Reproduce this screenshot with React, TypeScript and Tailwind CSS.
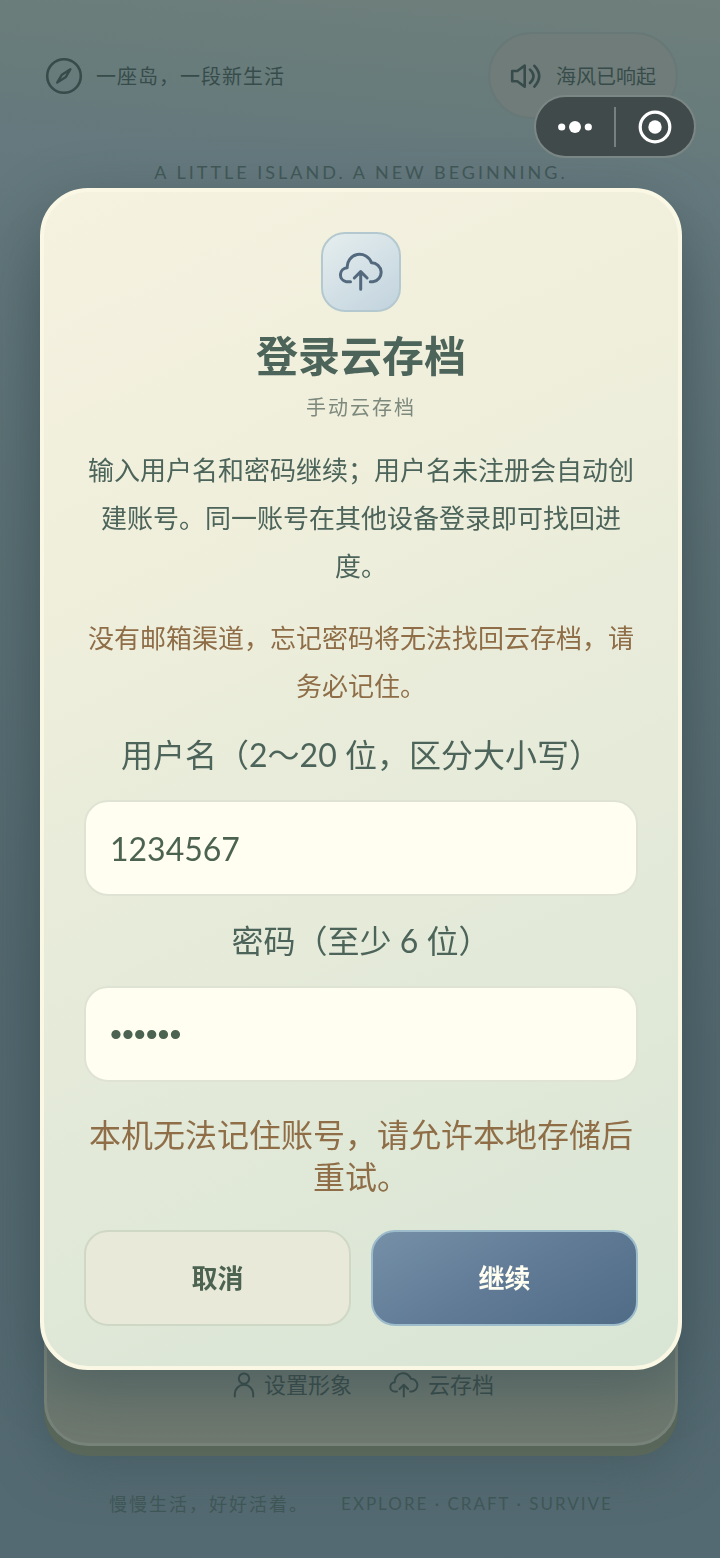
import { useState } from "react";

function CloudUpload({ className }: { className?: string }) {
  return (
    <svg viewBox="0 0 48 48" fill="none" stroke="currentColor" strokeWidth="3" strokeLinecap="round" strokeLinejoin="round" className={className} aria-hidden="true">
      <path d="M13.5 33.7H9.3A7 7 0 0 1 10.2 19.8A12.5 12.5 0 0 1 34.5 14.8A9.5 9.5 0 0 1 36 33.7H33.3"/>
      <path d="M23.7 41.3V23.6M17.3 30L23.7 23.6L30.1 30"/>
    </svg>
  );
}

function Compass() {
  return (
    <svg viewBox="0 0 40 40" fill="none" stroke="currentColor" strokeWidth="2.6" strokeLinejoin="round" className="size-10" aria-hidden="true">
      <circle cx="20" cy="20" r="16.8"/>
      <path d="M26.4 13.2L21.9 20.9L13.2 26.6L17.9 18.7Z" strokeWidth="2.4"/>
    </svg>
  );
}

function Speaker() {
  return (
    <svg viewBox="0 0 32 32" fill="none" stroke="currentColor" strokeWidth="2.6" strokeLinecap="round" strokeLinejoin="round" className="size-8" aria-hidden="true">
      <path d="M2.2 11H7.3L14.7 5.5V26.8L7.3 21.3H2.2Z"/>
      <path d="M20 9.6Q27 16 20 23M24.4 5.8Q34 16 24.4 26.6"/>
    </svg>
  );
}

function Person() {
  return (
    <svg viewBox="0 0 24 26" fill="none" stroke="currentColor" strokeWidth="2" strokeLinecap="round" className="h-[26px] w-6" aria-hidden="true">
      <circle cx="12" cy="6.6" r="5.2"/>
      <path d="M2.8 24.5V22a9.2 9.2 0 0 1 18.4 0v2.5"/>
    </svg>
  );
}

// Host app capsule, floats above everything
function Capsule() {
  return (
    <div className="fixed top-[95px] right-6 z-20 flex h-[63px] w-[162px] items-center rounded-full border-2 border-[#7b8785] bg-[#404a4a] text-white">
      <button type="button" aria-label="更多" className="flex flex-1 justify-center">
        <svg viewBox="0 0 36 14" fill="currentColor" className="h-[14px] w-9">
          <circle cx="4.7" cy="7" r="3.6"/>
          <circle cx="18" cy="7" r="6"/>
          <circle cx="31.3" cy="7" r="3.6"/>
        </svg>
      </button>
      <span className="h-10 w-[2px] bg-[#768080]"/>
      <button type="button" aria-label="关闭" className="flex flex-1 justify-center">
        <svg viewBox="0 0 34 34" className="size-[34px]">
          <circle cx="17" cy="17" r="14.8" fill="none" stroke="currentColor" strokeWidth="3.2"/>
          <circle cx="17" cy="17" r="6.7" fill="currentColor"/>
        </svg>
      </button>
    </div>
  );
}

const field = "h-24 w-full rounded-3xl border-2 border-[#dfe3d3] bg-[#fffef1] px-6 text-[#4b6350] outline-none";

function LoginDialog() {
  const [name, setName] = useState("1234567");
  const [password, setPassword] = useState("123456");
  return (
    <div className="fixed inset-0 z-10 flex items-center pl-10 pr-[38px]">
      <form
        role="dialog"
        aria-labelledby="dialog-title"
        onSubmit={(e) => e.preventDefault()}
        className="flex w-full flex-col items-center rounded-[48px] border-4 border-[#faf8e4] bg-linear-[155deg,#f5f2e0_0%,#f0efdc_25%,#e5ead9_60%,#d8e5d5_100%] bg-origin-border px-10 py-10 text-center text-[#4c645a] shadow-[0_16px_60px_rgba(50,68,72,0.4)]"
      >
        <div className="flex size-20 items-center justify-center rounded-3xl border-2 border-[#b4c9cf] bg-linear-[145deg,#e5eeee,#c2d3de] text-[#52697e]">
          <CloudUpload className="size-12"/>
        </div>
        <h1 id="dialog-title" className="mt-4 text-[42px] leading-[56px] font-bold">登录云存档</h1>
        <p className="mt-2 text-[20px] leading-[30px] tracking-[2px] text-[#7d897d]">手动云存档</p>
        <p className="mt-6 text-[26px] leading-[48px]">输入用户名和密码继续；用户名未注册会自动创建账号。同一账号在其他设备登录即可找回进度。</p>
        <p className="mt-6 text-[26px] leading-[48px] text-[#8e6d47]">没有邮箱渠道，忘记密码将无法找回云存档，请务必记住。</p>

        <label htmlFor="name" className="mt-6 text-[32px] leading-[42px]">用户名（2～20 位，区分大小写）</label>
        <input id="name" type="text" value={name} onChange={(e) => setName(e.target.value)} className={`mt-6 text-[32px] ${field}`}/>
        <label htmlFor="password" className="mt-6 text-[32px] leading-[42px]">密码（至少 6 位）</label>
        <input id="password" type="password" value={password} onChange={(e) => setPassword(e.target.value)} className={`mt-6 font-['Liberation_Sans',sans-serif] text-[34px] ${field}`}/>

        <p role="alert" className="mt-8 text-[32px] leading-[42px] text-[#8e6d47]">本机无法记住账号，请允许本地存储后重试。</p>

        <div className="mt-8 grid w-full grid-cols-2 gap-5 text-[26px] font-bold">
          <button type="button" className="h-24 rounded-3xl border-2 border-[#cfd7c5] bg-[#e9e9d9] text-[#4b6350]">取消</button>
          <button type="submit" className="h-24 rounded-3xl border-2 border-[#9dbccb] bg-linear-[150deg,#7590a7,#617b97_50%,#4f6b85] bg-origin-border text-[#fffef1]">继续</button>
        </div>
      </form>
    </div>
  );
}

export default function App() {
  return (
    <div lang="zh-CN" className="font-[Lato,'Noto_Sans_CJK_SC',sans-serif] text-[#374c4a]">
      <div className="flex min-h-screen flex-col bg-linear-[185deg,#6f7f7b_0%,#687c7b_7%,#65797e_12%,#5b7074_35%,#53686f_65%,#546a72_100%] pt-8 pr-[42px] pl-11">
        <header className="flex items-center justify-between">
          <div className="flex items-center gap-3 text-[20px] tracking-[1px]">
            <Compass/>
            <span>一座岛，一段新生活</span>
          </div>
          <button type="button" className="flex h-[87px] items-center gap-3.5 rounded-full border-2 border-[#687876] bg-[#6f7c79] px-5 text-[20px]">
            <Speaker/>
            <span>海风已响起</span>
          </button>
        </header>
        <p className="mt-10 text-center text-[18px] leading-[26px] tracking-[3px] text-[#415857]">A LITTLE ISLAND. A NEW BEGINNING.</p>

        <main className="mt-12 flex flex-1 flex-col justify-end rounded-[44px] border-[3px] border-[#788379] bg-linear-to-b from-[#66756f] from-94% to-[#70796f] pb-[42px] shadow-[0_10px_0_#59675a,0_20px_50px_rgba(60,82,88,0.5)]">
          <nav className="flex items-center justify-center gap-9 pl-1 text-[22px] leading-[32px]">
            <a href="#avatar" className="flex items-center gap-2">
              <Person/>
              设置形象
            </a>
            <a href="#cloud" className="flex items-center gap-2">
              <CloudUpload className="size-8"/>
              云存档
            </a>
          </nav>
        </main>

        <footer className="mt-11 mb-10 flex justify-center gap-8 leading-[28px] tracking-[2px] text-[#3f5656]">
          <span className="text-[18px]">慢慢生活，好好活着。</span>
          <span className="text-[17px]">EXPLORE · CRAFT · SURVIVE</span>
        </footer>
      </div>
      <LoginDialog/>
      <Capsule/>
    </div>
  );
}
